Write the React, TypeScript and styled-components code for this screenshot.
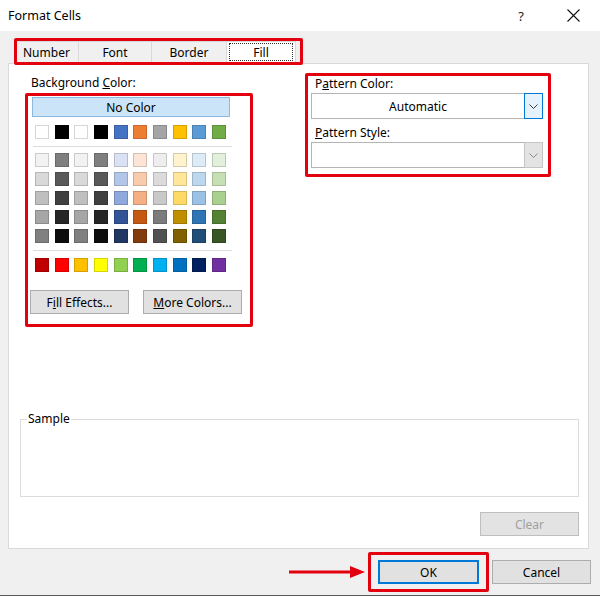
import React from "react";
import styled, { createGlobalStyle } from "styled-components";

const GlobalStyle = createGlobalStyle`
  html, body {
    margin: 0;
    padding: 0;
    background: #f0f0f0;
  }
  body {
    font-family: "Noto Sans", "Liberation Sans", sans-serif;
    font-size: 12px;
    color: #000;
  }
  * {
    box-sizing: border-box;
  }
`;

const ANNOTATION_RED = "#e3000f";

// base colours of the theme row, each followed by its five shades
const themeColumns = [
  ["#FFFFFF", "#F2F2F2", "#D9D9D9", "#BFBFBF", "#A6A6A6", "#808080"],
  ["#000000", "#7F7F7F", "#595959", "#404040", "#262626", "#0D0D0D"],
  ["#FFFFFF", "#F2F2F2", "#D9D9D9", "#BFBFBF", "#A6A6A6", "#808080"],
  ["#000000", "#7F7F7F", "#595959", "#404040", "#262626", "#0D0D0D"],
  ["#4472C4", "#D9E1F2", "#B4C6E7", "#8EA9DB", "#305496", "#203764"],
  ["#ED7D31", "#FCE4D6", "#F8CBAD", "#F4B084", "#C65911", "#833C0C"],
  ["#A5A5A5", "#EDEDED", "#DBDBDB", "#C9C9C9", "#7B7B7B", "#525252"],
  ["#FFC000", "#FFF2CC", "#FFE699", "#FFD966", "#BF8F00", "#806000"],
  ["#5B9BD5", "#DDEBF7", "#BDD7EE", "#9BC2E6", "#2F75B5", "#1F4E78"],
  ["#70AD47", "#E2EFDA", "#C6E0B4", "#A9D08E", "#548235", "#375623"],
];

const standardColors = [
  "#C00000",
  "#FF0000",
  "#FFC000",
  "#FFFF00",
  "#92D050",
  "#00B050",
  "#00B0F0",
  "#0070C0",
  "#002060",
  "#7030A0",
];

const tabs = [
  { label: "Number", width: 62 },
  { label: "Font", width: 73 },
  { label: "Border", width: 75 },
  { label: "Fill", width: 69, active: true },
];

export default function App() {
  const baseRow = themeColumns.map((col) => col[0]);
  const shadeRows = [1, 2, 3, 4, 5].map((i) => themeColumns.map((col) => col[i]));

  return (
    <>
      <GlobalStyle />
      <Dialog>
        <TitleBar>
          <Title>Format Cells</Title>
          <TitleButtons>
            <HelpGlyph>?</HelpGlyph>
            <CloseIcon width="13" height="13" viewBox="0 0 13 13">
              <path d="M0.5 0.5 L12.5 12.5 M12.5 0.5 L0.5 12.5" stroke="#111" strokeWidth="1.1" />
            </CloseIcon>
          </TitleButtons>
        </TitleBar>

        <Body>
          <TabsHighlight>
            {tabs.map((t) => (
              <Tab key={t.label} $width={t.width} $active={!!t.active}>
                {t.active ? <FocusRing>{t.label}</FocusRing> : t.label}
              </Tab>
            ))}
          </TabsHighlight>

          <Panel>
            <TopRow>
              <ColorColumn>
                <FieldLabel $indent={6}>
                  Background <u>C</u>olor:
                </FieldLabel>
                <PaletteBox>
                  <NoColorButton>No Color</NoColorButton>
                  <SwatchGrid $top={8}>
                    {baseRow.map((c, i) => (
                      <Swatch key={i} $color={c} />
                    ))}
                  </SwatchGrid>
                  <Separator />
                  <SwatchGrid $top={6}>
                    {shadeRows.flat().map((c, i) => (
                      <Swatch key={i} $color={c} />
                    ))}
                  </SwatchGrid>
                  <Separator />
                  <SwatchGrid $top={7}>
                    {standardColors.map((c) => (
                      <Swatch key={c} $color={c} />
                    ))}
                  </SwatchGrid>
                  <PaletteButtons>
                    <PushButton $width={99}>
                      F<u>i</u>ll Effects...
                    </PushButton>
                    <PushButton $width={99}>
                      <u>M</u>ore Colors...
                    </PushButton>
                  </PaletteButtons>
                </PaletteBox>
              </ColorColumn>

              <PatternBox>
                <FieldLabel $indent={4}>
                  P<u>a</u>ttern Color:
                </FieldLabel>
                <Combo>
                  <ComboValue>Automatic</ComboValue>
                  <ComboArrow $focused>
                    <Chevron color="#3c3c3c" />
                  </ComboArrow>
                </Combo>
                <FieldLabel $indent={4} $top={6}>
                  <u>P</u>attern Style:
                </FieldLabel>
                <Combo>
                  <ComboValue />
                  <ComboArrow>
                    <Chevron color="#8a8a8a" />
                  </ComboArrow>
                </Combo>
              </PatternBox>
            </TopRow>

            <SampleGroup>
              <SampleLegend>Sample</SampleLegend>
            </SampleGroup>

            <ClearRow>
              <PushButton $width={99} disabled>
                Clear
              </PushButton>
            </ClearRow>
          </Panel>
        </Body>

        <Footer>
          <PointerArrow width="76" height="12" viewBox="0 0 76 12">
            <line x1="0" y1="6" x2="64" y2="6" stroke={ANNOTATION_RED} strokeWidth="3" />
            <polygon points="61,0 76,6 61,12" fill={ANNOTATION_RED} />
          </PointerArrow>
          <OkHighlight>
            <PushButton $width={101} $default>
              OK
            </PushButton>
          </OkHighlight>
          <PushButton $width={99}>Cancel</PushButton>
        </Footer>
      </Dialog>
    </>
  );
}

function Chevron({ color }: { color: string }) {
  return (
    <svg width="9" height="5" viewBox="0 0 9 5">
      <path d="M0.5 0.5 L4.5 4.5 L8.5 0.5" fill="none" stroke={color} strokeWidth="1" />
    </svg>
  );
}

const Dialog = styled.div`
  width: 600px;
  height: 596px;
  display: flex;
  flex-direction: column;
  background: #f0f0f0;
  border-bottom: 1px solid #5a5a5a;
  overflow: hidden;
`;

const TitleBar = styled.div`
  height: 31px;
  flex: none;
  background: #fff;
  display: flex;
  align-items: center;
  justify-content: space-between;
  padding: 0 20px 0 8px;
`;

const Title = styled.div`
  font-size: 12.5px;
  color: #000;
`;

const TitleButtons = styled.div`
  display: flex;
  align-items: center;
  gap: 43px;
`;

const HelpGlyph = styled.span`
  font-size: 13px;
  color: #222;
`;

const CloseIcon = styled.svg`
  display: block;
`;

const Body = styled.div`
  flex: 1;
  display: flex;
  flex-direction: column;
  padding: 7px 11px 0 8px;
`;

const TabsHighlight = styled.div`
  position: relative;
  z-index: 1;
  align-self: flex-start;
  margin: 0 0 -2px 6px;
  width: 289px;
  height: 27px;
  display: flex;
  border: 3px solid ${ANNOTATION_RED};
  border-radius: 2px;
  background: #f0f0f0;
`;

const Tab = styled.div<{ $width: number; $active: boolean }>`
  width: ${(p) => p.$width}px;
  height: 21px;
  display: flex;
  align-items: center;
  justify-content: center;
  padding: ${(p) => (p.$active ? "1px 2px" : "0")};
  background: ${(p) => (p.$active ? "#fff" : "#f0f0f0")};
  border-top: 1px solid #d9d9d9;
  border-right: 1px solid #d9d9d9;
  color: #000;
  &:first-child {
    justify-content: flex-start;
    padding-left: 6px;
  }
`;

const FocusRing = styled.span`
  flex: 1;
  align-self: stretch;
  display: flex;
  align-items: center;
  justify-content: center;
  border: 1px dotted #333;
`;

const Panel = styled.div`
  height: 486px;
  background: #fff;
  border: 1px solid #d9d9d9;
  display: flex;
  flex-direction: column;
  padding: 9px 9px 11px 11px;
`;

const TopRow = styled.div`
  display: flex;
  align-items: flex-start;
  gap: 52px;
  padding-left: 5px;
`;

const ColorColumn = styled.div`
  display: flex;
  flex-direction: column;
  padding-top: 2px;
`;

const FieldLabel = styled.div<{ $indent: number; $top?: number }>`
  height: 16px;
  line-height: 16px;
  margin: ${(p) => p.$top ?? 0}px 0 0 ${(p) => p.$indent}px;
  white-space: nowrap;
  color: #000;
`;

const PaletteBox = styled.div`
  margin-top: 2px;
  width: 228px;
  height: 234px;
  border: 3px solid ${ANNOTATION_RED};
  border-radius: 2px;
  padding: 1px 0 0 4px;
  display: flex;
  flex-direction: column;
`;

const NoColorButton = styled.div`
  width: 198px;
  height: 20px;
  display: flex;
  align-items: center;
  justify-content: center;
  background: #cce4f7;
  border: 1px solid #8fb8dd;
  color: #000;
`;

const SwatchGrid = styled.div<{ $top: number }>`
  display: grid;
  grid-template-columns: repeat(10, 14px);
  column-gap: 5.67px;
  row-gap: 5px;
  margin: ${(p) => p.$top}px 0 0 3px;
`;

const Swatch = styled.div<{ $color: string }>`
  width: 14px;
  height: 14px;
  background: ${(p) => p.$color};
  box-shadow: inset 0 0 0 1px rgba(0, 0, 0, 0.16);
`;

const Separator = styled.div`
  width: 199px;
  height: 1px;
  margin: 7px 0 0 1px;
  background: #dcdcdc;
`;

const PaletteButtons = styled.div`
  display: flex;
  gap: 14px;
  margin: 18px 0 0 -2px;
`;

const PushButton = styled.button<{ $width: number; $default?: boolean }>`
  width: ${(p) => p.$width}px;
  height: 24px;
  padding: 0;
  font-family: inherit;
  font-size: 12px;
  color: #000;
  background: #e1e1e1;
  border: 1px solid ${(p) => (p.$default ? "#0078d7" : "#adadad")};
  box-shadow: ${(p) => (p.$default ? "inset 0 0 0 1px #0078d7" : "none")};
  &:disabled {
    color: #a0a0a0;
    background: #e3e3e3;
    border-color: #bfbfbf;
  }
`;

const PatternBox = styled.div`
  width: 246px;
  height: 104px;
  border: 3px solid ${ANNOTATION_RED};
  border-radius: 2px;
  padding: 0 5px 0 3px;
  display: flex;
  flex-direction: column;
`;

const Combo = styled.div`
  height: 26px;
  margin-top: 1px;
  display: flex;
  border: 1px solid #b4b4b4;
  background: #fff;
`;

const ComboValue = styled.div`
  flex: 1;
  display: flex;
  align-items: center;
  justify-content: center;
  color: #000;
`;

const ComboArrow = styled.div<{ $focused?: boolean }>`
  width: 19px;
  display: flex;
  align-items: center;
  justify-content: center;
  margin: -1px -1px -1px 0;
  background: ${(p) => (p.$focused ? "#e5f1fb" : "#e3e3e3")};
  border: 1px solid ${(p) => (p.$focused ? "#0078d7" : "#c4c4c4")};
`;

const SampleGroup = styled.fieldset`
  margin: 84px 0 0 0;
  padding: 0;
  height: 86px;
  border: 1px solid #dcdcdc;
  min-width: 0;
`;

const SampleLegend = styled.legend`
  margin-left: 6px;
  padding: 0 1px;
  line-height: 16px;
  font-size: 12px;
  color: #000;
`;

const ClearRow = styled.div`
  display: flex;
  justify-content: flex-end;
  margin-top: 15px;
`;

const Footer = styled.div`
  height: 46px;
  flex: none;
  display: flex;
  align-items: center;
  justify-content: flex-end;
  padding-right: 9px;
`;

const PointerArrow = styled.svg`
  display: block;
  margin-right: 3px;
`;

const OkHighlight = styled.div`
  padding: 5px 7px;
  margin-right: 3px;
  border: 3px solid ${ANNOTATION_RED};
  border-radius: 2px;
`;
